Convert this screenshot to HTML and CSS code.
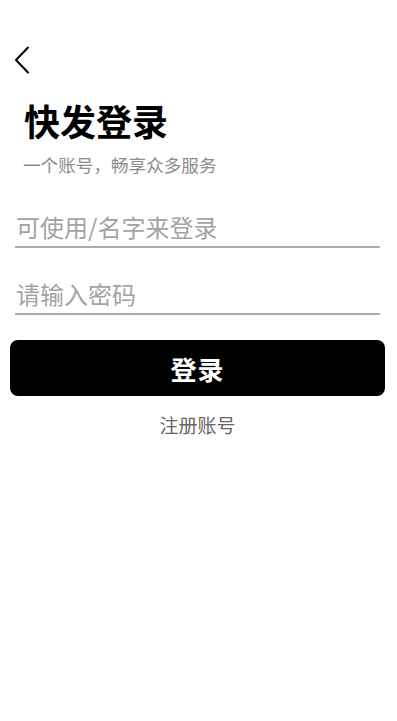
FILE: index.html
```html
<!DOCTYPE html>
<html lang="zh-CN">
<head>
<meta charset="utf-8">
<meta name="viewport" content="width=device-width, initial-scale=1">
<title>快发登录</title>
<link rel="stylesheet" href="styles.css">
</head>
<body>
<div class="page">
  <div class="back">
    <svg width="16" height="28" viewBox="0 0 16 28" aria-hidden="true">
      <polyline points="14,1.5 2,14 14,26.5" fill="none" stroke="#000" stroke-width="2" stroke-linecap="round" stroke-linejoin="round"/>
    </svg>
  </div>
  <h1 class="title">快发登录</h1>
  <p class="subtitle">一个账号，畅享众多服务</p>
  <form class="form">
    <input class="field" type="text" placeholder="可使用/名字来登录">
    <input class="field field-pass" type="password" placeholder="请输入密码">
    <button class="submit" type="button">登录</button>
  </form>
  <div class="register">注册账号</div>
</div>
</body>
</html>
```
FILE: styles.css
```css
html, body {
  margin: 0;
  padding: 0;
  background: #fff;
}
body {
  font-family: "Noto Sans CJK SC", "Noto Sans", sans-serif;
  color: #000;
}
.page {
  display: flex;
  flex-direction: column;
  padding: 46px 12px 0 10px;
}
.back {
  height: 28px;
  padding-left: 4px;
  display: flex;
  align-items: center;
}
.back svg {
  display: block;
}
.title {
  margin: 26px 0 0 14px;
  font-size: 36px;
  line-height: 40px;
  font-weight: 700;
}
.subtitle {
  margin: 15px 0 0 13px;
  font-size: 17.6px;
  line-height: 20px;
  color: #8c8c8c;
}
.form {
  display: flex;
  flex-direction: column;
  margin-top: 37px;
}
.field {
  margin: 0 5px 0 5px;
  padding: 0 0 4px 1px;
  border: none;
  border-bottom: 2px solid #ababab;
  outline: none;
  font-family: inherit;
  font-size: 24px;
  line-height: 30px;
  height: 30px;
  box-sizing: content-box;
  color: #000;
  background: transparent;
}
.field::placeholder {
  color: #a3a3a3;
}
.field-pass {
  margin-top: 31px;
}
.submit {
  margin-top: 25px;
  height: 56px;
  border: none;
  border-radius: 8px;
  background: #000;
  color: #fff;
  font-family: inherit;
  font-size: 26px;
  font-weight: 700;
  letter-spacing: 1px;
  padding: 0;
}
.register {
  margin-top: 17px;
  text-align: center;
  font-size: 19px;
  line-height: 24px;
  color: #666;
}
```
